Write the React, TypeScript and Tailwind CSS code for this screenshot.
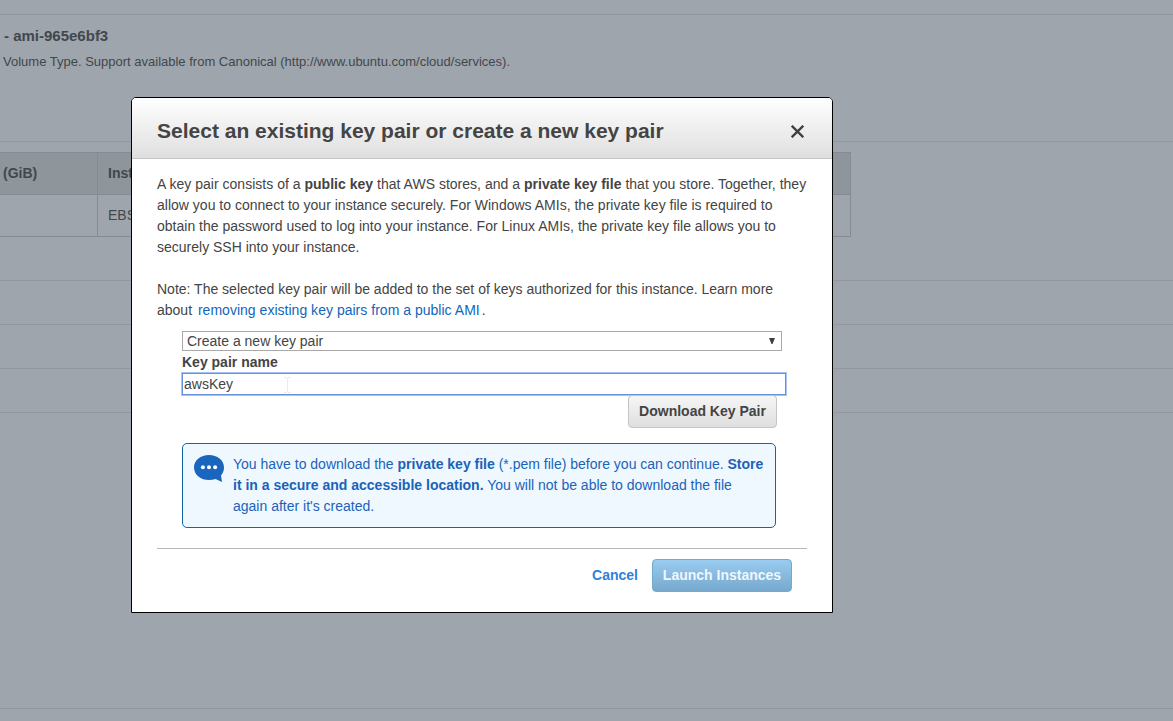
import type { ReactNode } from "react";

function Line({ className = "", children }: { className?: string; children: ReactNode }) {
  return <div className={`h-[21px] whitespace-pre ${className}`}>{children}</div>;
}

function PageBehind() {
  return (
    <div className="flex h-[721px] w-full flex-col bg-[#9fa5ac] text-[#42474c]">
      <div className="h-[15px] shrink-0 border-b border-[#9297a0]" />
      <div className="h-[127px] shrink-0 border-b border-[#9297a0] pl-[3px] pt-[11px]">
        <div className="ml-px h-5 whitespace-pre text-[15px] font-bold leading-5">- ami-965e6bf3</div>
        <div className="mt-[6px] h-5 whitespace-pre text-[13px] leading-5">
          Volume Type. Support available from Canonical (http://www.ubuntu.com/cloud/services).
        </div>
      </div>
      <div className="h-[139px] shrink-0 border-b border-[#9297a0] pt-[10px]">
        <div className="w-[851px] border-y border-r border-[#868b93] text-sm">
          <div className="flex h-[42px] items-center border-b border-[#868b93] bg-[#8e959b] font-bold">
            <div className="flex h-full w-[98px] items-center border-r border-[#868b93] pb-[2px] pl-[3px]">(GiB)</div>
            <div className="pb-[2px] pl-[10px]">Instance</div>
          </div>
          <div className="flex h-[41px] items-center">
            <div className="h-full w-[98px] border-r border-[#868b93]" />
            <div className="pb-[2px] pl-[10px]">EBS</div>
          </div>
        </div>
      </div>
      <div className="h-11 shrink-0 border-b border-[#9297a0]" />
      <div className="h-11 shrink-0 border-b border-[#9297a0]" />
      <div className="h-11 shrink-0 border-b border-[#9297a0]" />
      <div className="h-[296px] shrink-0 border-b border-[#9297a0]" />
    </div>
  );
}

function SpeechIcon() {
  return (
    <svg width="30" height="28" viewBox="0 0 30 28">
      <path
        d="M15 0C6.700 0 0 5.200 0 12.400S6.700 25 15 25c2.400 0 4.500-.4 6.500-1.100L28 27 27 20.300c1.900-2.200 3-4.900 3-7.900C30 5.200 23.300 0 15 0Z"
        fill="#1a66bf"
      />
      <circle cx="8.900" cy="12.300" r="2" fill="#fff" />
      <circle cx="15" cy="12.300" r="2" fill="#fff" />
      <circle cx="21.100" cy="12.300" r="2" fill="#fff" />
    </svg>
  );
}

export default function App() {
  return (
    <div className="relative h-[721px] w-[1173px] overflow-hidden font-['Liberation_Sans',Arial,sans-serif]">
      <PageBehind />
      <div className="absolute left-[131px] top-[97px] h-[516px] w-[702px] rounded-t-[5px] border border-black bg-white text-sm leading-[21px] text-[#444]">
        <div className="flex h-[61px] items-center justify-between rounded-t-[4px] border-b border-[#c4c4c4] bg-linear-to-b from-white to-[#dfdfdf] pl-[25px] pr-[28px]">
          <h1 className="mt-[5px] whitespace-nowrap text-[21px] font-bold leading-6">
            Select an existing key pair or create a new key pair
          </h1>
          <svg className="mt-[6px]" width="13" height="13" viewBox="0 0 13 13" stroke="#404040" strokeWidth="2.300">
            <path d="M.7.7l11.600 11.600M12.300.7L.7 12.300" />
          </svg>
        </div>
        <div className="px-[25px] pt-[15px]">
          <Line className="tracking-[0.016px]">
            A key pair consists of a <b>public key</b> that AWS stores, and a <b>private key file</b> that you store. Together, they
          </Line>
          <Line className="tracking-[0.010px]">
            allow you to connect to your instance securely. For Windows AMIs, the private key file is required to
          </Line>
          <Line className="tracking-[0.010px]">
            obtain the password used to log into your instance. For Linux AMIs, the private key file allows you to
          </Line>
          <Line>securely SSH into your instance.</Line>
          <Line className="mt-[21px]">
            Note: The selected key pair will be added to the set of keys authorized for this instance. Learn more
          </Line>
          <Line>
            about <span className="ml-[2px] mr-[2px] tracking-[0.02px] text-[#1166bb]">removing existing key pairs from a public AMI</span>.
          </Line>
          <div className="ml-[25px]">
            <div className="mt-[10px] flex h-5 w-[600px] items-center justify-between border border-[#a9a9a9] pl-1 pr-[6px]">
              <span>Create a new key pair</span>
              <svg width="6" height="6" viewBox="0 0 6 6" fill="#404040">
                <path d="M0 0h6L3.500 6h-1Z" />
              </svg>
            </div>
            <Line className="pt-px font-bold">Key pair name</Line>
            <div className="-ml-px flex h-6 w-[606px] items-center border border-[#a5c3f5] bg-white">
              <div className="flex h-full w-full items-center border border-[#6690d8] pl-px">
                <span>awsKey</span>
                <svg className="ml-[51px] mt-px" width="7" height="16" viewBox="0 0 7 16" fill="none" stroke="#ececec">
                  <path d="M0 .5h3M4 .5h3M3.500 1v14M0 15.500h3M4 15.500h3" />
                </svg>
              </div>
            </div>
            <div className="-mt-px ml-[446px] flex h-[33px] w-[149px] items-center justify-center rounded border border-[#c4c4c4] bg-linear-to-b from-[#f6f6f6] to-[#dfdfdf] pb-px font-bold">
              Download Key Pair
            </div>
            <div className="mt-[15px] flex h-[85px] w-[594px] rounded-[5px] border border-[#1166ab] bg-[#f0f8ff] pl-[11px] text-[#1a63b8]">
              <div className="mt-[11px] w-[39px] shrink-0">
                <SpeechIcon />
              </div>
              <div className="pt-[10px]">
                <Line>
                  You have to download the <b>private key file</b> (*.pem file) before you can continue. <b>Store</b>
                </Line>
                <Line>
                  <b>it in a secure and accessible location.</b> You will not be able to download the file
                </Line>
                <Line>again after it's created.</Line>
              </div>
            </div>
          </div>
          <div className="mt-5 flex items-center justify-end border-t border-[#b8b8b8] pr-[15px] pt-[10px] font-bold">
            <span className="mr-[14px] text-[#2e80dc]">Cancel</span>
            <div className="flex h-[33px] w-[140px] items-center justify-center rounded border border-[#75a8cf] bg-linear-to-b from-[#99ccf0] to-[#77a8cd] pb-px text-[#eef7ff]">
              Launch Instances
            </div>
          </div>
        </div>
      </div>
    </div>
  );
}
